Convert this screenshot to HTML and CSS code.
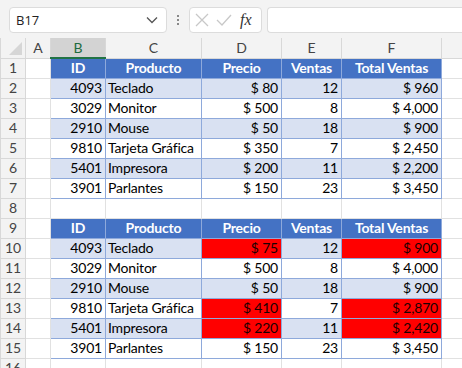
FILE: index.html
```html
<!DOCTYPE html>
<html>
<head>
<meta charset="utf-8">
<link rel="stylesheet" href="styles.css">
</head>
<body>
<div class="topbar">
  <div class="namebox">
    <span class="nb-text">B17</span>
    <svg class="chev" width="12" height="8" viewBox="0 0 12 8"><polyline points="1,1.5 6,6.5 11,1.5" fill="none" stroke="#555" stroke-width="1.3"/></svg>
  </div>
  <div class="dots"><i></i><i></i><i></i></div>
  <div class="fbtns">
    <svg width="16" height="16" viewBox="0 0 16 16"><path d="M2 2 L14 14 M14 2 L2 14" stroke="#c8c8c8" stroke-width="1.3" fill="none"/></svg>
    <svg width="18" height="16" viewBox="0 0 18 16"><polyline points="2,8 7,13 16,3" stroke="#c8c8c8" stroke-width="1.3" fill="none"/></svg>
    <span class="fx">fx</span>
  </div>
  <div class="finput"></div>
</div>
<table class="sheet">
  <colgroup>
    <col class="c-rh"><col class="c-a"><col class="c-b"><col class="c-c"><col class="c-d"><col class="c-e"><col class="c-f"><col class="c-g">
  </colgroup>
  <tr class="colhdr">
    <th class="corner"><span class="tri"></span></th><th>A</th><th class="sel">B</th><th>C</th><th>D</th><th>E</th><th>F</th><th></th>
  </tr>
  <tr><th>1</th><td></td><td class="h">ID</td><td class="h">Producto</td><td class="h">Precio</td><td class="h">Ventas</td><td class="h">Total Ventas</td><td></td></tr>
  <tr class="band"><th>2</th><td></td><td class="t r">4093</td><td class="t">Teclado</td><td class="t r">$ 80</td><td class="t r">12</td><td class="t r">$ 960</td><td></td></tr>
  <tr><th>3</th><td></td><td class="t r">3029</td><td class="t">Monitor</td><td class="t r">$ 500</td><td class="t r">8</td><td class="t r">$ 4,000</td><td></td></tr>
  <tr class="band"><th>4</th><td></td><td class="t r">2910</td><td class="t">Mouse</td><td class="t r">$ 50</td><td class="t r">18</td><td class="t r">$ 900</td><td></td></tr>
  <tr><th>5</th><td></td><td class="t r">9810</td><td class="t">Tarjeta Gráfica</td><td class="t r">$ 350</td><td class="t r">7</td><td class="t r">$ 2,450</td><td></td></tr>
  <tr class="band"><th>6</th><td></td><td class="t r">5401</td><td class="t">Impresora</td><td class="t r">$ 200</td><td class="t r">11</td><td class="t r">$ 2,200</td><td></td></tr>
  <tr><th>7</th><td></td><td class="t r">3901</td><td class="t">Parlantes</td><td class="t r">$ 150</td><td class="t r">23</td><td class="t r">$ 3,450</td><td></td></tr>
  <tr><th>8</th><td></td><td></td><td></td><td></td><td></td><td></td><td></td></tr>
  <tr><th>9</th><td></td><td class="h">ID</td><td class="h">Producto</td><td class="h">Precio</td><td class="h">Ventas</td><td class="h">Total Ventas</td><td></td></tr>
  <tr class="band"><th>10</th><td></td><td class="t r">4093</td><td class="t">Teclado</td><td class="t r red">$ 75</td><td class="t r">12</td><td class="t r red">$ 900</td><td></td></tr>
  <tr><th>11</th><td></td><td class="t r">3029</td><td class="t">Monitor</td><td class="t r">$ 500</td><td class="t r">8</td><td class="t r">$ 4,000</td><td></td></tr>
  <tr class="band"><th>12</th><td></td><td class="t r">2910</td><td class="t">Mouse</td><td class="t r">$ 50</td><td class="t r">18</td><td class="t r">$ 900</td><td></td></tr>
  <tr><th>13</th><td></td><td class="t r">9810</td><td class="t">Tarjeta Gráfica</td><td class="t r red">$ 410</td><td class="t r">7</td><td class="t r red">$ 2,870</td><td></td></tr>
  <tr class="band"><th>14</th><td></td><td class="t r">5401</td><td class="t">Impresora</td><td class="t r red">$ 220</td><td class="t r">11</td><td class="t r red">$ 2,420</td><td></td></tr>
  <tr><th>15</th><td></td><td class="t r">3901</td><td class="t">Parlantes</td><td class="t r">$ 150</td><td class="t r">23</td><td class="t r">$ 3,450</td><td></td></tr>
  <tr><th>16</th><td></td><td></td><td></td><td></td><td></td><td></td><td></td></tr>
</table>
</body>
</html>
```
FILE: styles.css
```css
html, body {
  margin: 0;
  padding: 0;
  background: #ffffff;
  overflow: hidden;
}
body {
  width: 462px;
  height: 368px;
  font-family: "Lato", "Liberation Sans", sans-serif;
}
.topbar {
  height: 38px;
  background: #f3f3f3;
  display: flex;
  align-items: center;
  padding-left: 9px;
  box-sizing: border-box;
  padding-top: 1px;
}
.namebox {
  width: 158px;
  height: 26px;
  box-sizing: border-box;
  background: #fff;
  border: 1px solid #dcdcdc;
  border-radius: 4px;
  display: flex;
  align-items: center;
  justify-content: space-between;
  padding: 0 8px 0 6px;
  font-family: "Open Sans", "Liberation Sans", sans-serif;
  font-size: 13px;
  color: #222;
}
.dots {
  width: 22px;
  display: flex;
  flex-direction: column;
  align-items: center;
  gap: 2px;
}
.dots i {
  width: 2px;
  height: 2px;
  background: #888;
  display: block;
}
.fbtns {
  width: 73px;
  height: 26px;
  box-sizing: border-box;
  background: #fff;
  border: 1px solid #dcdcdc;
  border-radius: 4px;
  display: flex;
  align-items: center;
  padding-left: 4px;
  gap: 5px;
}
.fx {
  font-family: "Liberation Serif", serif;
  font-style: italic;
  font-size: 16px;
  color: #333;
  margin-left: 2px;
}
.finput {
  flex: 1;
  height: 26px;
  margin-left: 5px;
  box-sizing: border-box;
  background: #fff;
  border: 1px solid #dcdcdc;
  border-right: none;
  border-radius: 4px 0 0 4px;
}
.sheet {
  border-collapse: collapse;
  table-layout: fixed;
  width: 462px;
  font-size: 14px;
  letter-spacing: -0.2px;
  color: #000;
}
.c-rh { width: 25px; }
.c-a { width: 25px; }
.c-b { width: 55px; }
.c-c { width: 96px; }
.c-d { width: 80px; }
.c-e { width: 60px; }
.c-f { width: 100px; }
.c-g { width: 21px; }
.sheet tr { height: 20px; }
.sheet td, .sheet th {
  border: 1px solid #e1e1e1;
  padding: 0 3px;
  white-space: nowrap;
  overflow: hidden;
  line-height: 18px;
  height: 19px;
  box-sizing: border-box;
}
.sheet td.t:not(.r) {
  padding-left: 2px;
}
.sheet th {
  background: #f3f3f3;
  font-weight: normal;
  color: #444;
  text-align: center;
  border-color: #d8d8d8;
  padding: 0;
  font-size: 14px;
  letter-spacing: 0;
}
.colhdr th {
  height: 19px;
  border-top: none;
}
.colhdr th.sel {
  background: #d3d3d3;
  color: #1e6b3f;
  border-bottom: 2px solid #217346;
}
.corner {
  position: relative;
}
.tri {
  position: absolute;
  right: 3px;
  bottom: 3px;
  width: 0;
  height: 0;
  border-left: 13px solid transparent;
  border-bottom: 13px solid #d6d6d6;
}
.sheet td.h {
  background: #4472c4;
  color: #fff;
  font-weight: bold;
  text-align: center;
  border: 1px solid #8ea9db;
}
.sheet td.t {
  border: 1px solid #8ea9db;
}
.band td.t {
  background: #d9e1f2;
}
.sheet td.r {
  text-align: right;
}
.sheet td.red,
.band td.red {
  background: #ff0000;
  color: #1a0000;
}
```
